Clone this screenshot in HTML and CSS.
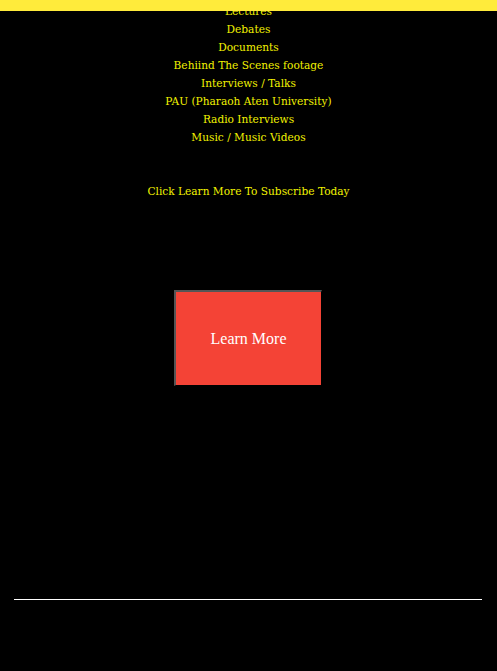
FILE: index.html
```html
<!DOCTYPE html>
<html>
<head>
<meta charset="utf-8">
<link rel="stylesheet" href="styles.css">
</head>
<body>
<div class="topbar"></div>
<main class="content">
  <ul class="list">
    <li>Lectures</li>
    <li>Debates</li>
    <li>Documents</li>
    <li>Behiind The Scenes footage</li>
    <li>Interviews / Talks</li>
    <li>PAU (Pharaoh Aten University)</li>
    <li>Radio Interviews</li>
    <li>Music / Music Videos</li>
  </ul>
  <p class="cta">Click Learn More To Subscribe Today</p>
  <div class="btn-wrap">
    <button class="btn">Learn More</button>
  </div>
  <hr class="rule">
</main>
</body>
</html>
```
FILE: styles.css
```css
html, body {
  margin: 0;
  padding: 0;
  background: #000;
}
body {
  font-family: "DejaVu Serif", Georgia, serif;
  color: #f2f200;
}
.topbar {
  position: fixed;
  top: 0;
  left: 0;
  right: 0;
  height: 11px;
  background: #ffeb3b;
  z-index: 2;
}
.content {
  padding-top: 2px;
  display: flex;
  flex-direction: column;
  align-items: center;
}
.list {
  list-style: none;
  margin: 0;
  padding: 0;
  text-align: center;
  font-size: 10.6px;
  line-height: 18px;
}
.cta {
  margin: 36px 0 0;
  font-size: 10.6px;
  line-height: 18px;
}
.btn-wrap {
  margin-top: 90px;
  margin-right: 1px;
}
.btn {
  display: block;
  width: 148px;
  height: 96px;
  background: #f44336;
  color: #fff;
  font-family: "Liberation Serif", "Times New Roman", serif;
  font-size: 16px;
  border-style: solid;
  border-width: 2px 1px 1px 2px;
  border-color: #555 #000 #000 #555;
  padding: 0;
}
.rule {
  align-self: stretch;
  margin: 213px 15px 0 14px;
  border: 0;
  height: 1px;
  background: #fff;
}
```
